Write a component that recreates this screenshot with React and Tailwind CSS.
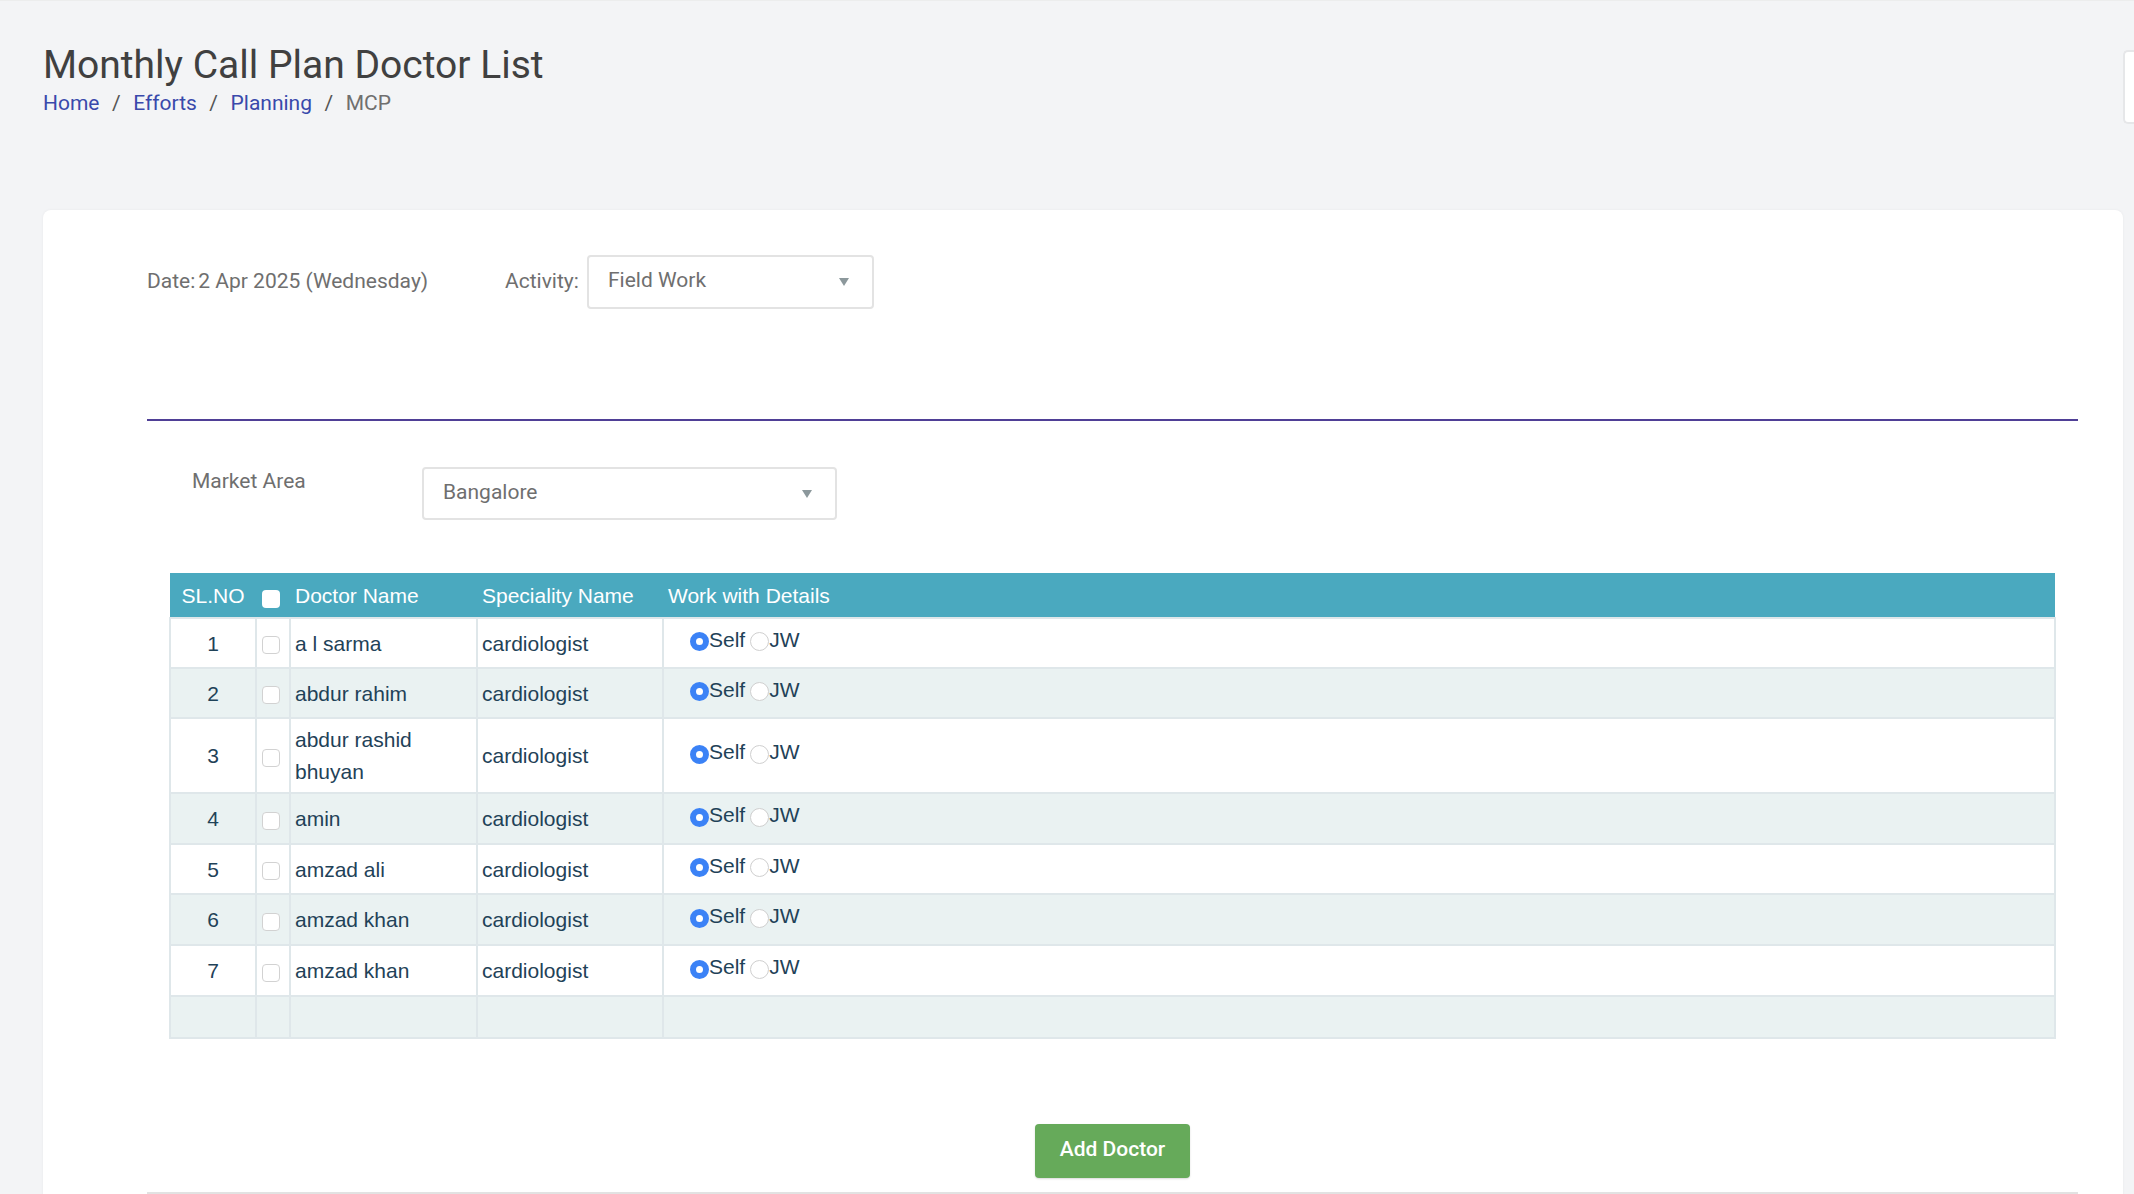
import React from "react";

const rows = [
  { n: 1, name: "a l sarma", h: "h-[50px]" },
  { n: 2, name: "abdur rahim", h: "h-[50px]" },
  { n: 3, name: "abdur rashid bhuyan", h: "h-[75px]" },
  { n: 4, name: "amin", h: "h-[51px]" },
  { n: 5, name: "amzad ali", h: "h-[50px]" },
  { n: 6, name: "amzad khan", h: "h-[51px]" },
  { n: 7, name: "amzad khan", h: "h-[51px]" },
];

const Caret = () => (
  <svg width="10" height="8" viewBox="0 0 10 8" className="shrink-0">
    <path d="M0 0H10L5 8Z" fill="#8c989c" />
  </svg>
);

const Sep = () => <span className="text-[#555]">/</span>;

function Select({ label, size }) {
  return (
    <div className={`flex ${size} items-center justify-between rounded-[4px] border-2 border-[#e3e3e3] bg-white pl-[19px] pr-[23px] text-[#6f6f6f]`}>
      <span className="mb-[2px]">{label}</span>
      <Caret />
    </div>
  );
}

const cell = "border-2 border-[#dfe7ea] p-0 pt-[1px] align-middle";

function Row({ row, even }) {
  return (
    <tr className={`${row.h} ${even ? "bg-[#eaf2f2]" : "bg-white"}`}>
      <td className={`${cell} text-center`}>{row.n}</td>
      <td className={cell}>
        <span className="ml-[5px] mt-[3px] block h-[18px] w-[18px] rounded-[4px] border border-[#d2d2d2] bg-white" />
      </td>
      <td className={`${cell} pl-[4px] pr-[4px] leading-[32px]`}>
        <span className="block w-[140px]">{row.name}</span>
      </td>
      <td className={`${cell} pl-[4px]`}>cardiologist</td>
      <td className={`${cell} pl-[26px]`}>
        <div className="-mt-[8px] flex items-center">
          <span className="mt-[4px] h-[19px] w-[19px] rounded-full border-[6px] border-[#3b82f6] bg-white" />
          <span>Self</span>
          <span className="ml-[5px] mt-[4px] h-[19px] w-[19px] rounded-full border border-[#cfcfcf] bg-white" />
          <span>JW</span>
        </div>
      </td>
    </tr>
  );
}

export default function App() {
  return (
    <div className="relative h-[1194px] overflow-hidden border-t border-[#eceded] bg-[#f3f4f6] pl-[43px] pr-[11px] font-['Roboto',sans-serif]">
      <h1 className="pt-[41px] text-[39px] font-normal leading-[46px] text-[#404040]">Monthly Call Plan Doctor List</h1>
      <nav className="mt-[1px] flex gap-[12.5px] text-[21px] leading-[28px] text-[#6f6f6f]">
        <a className="text-[#3949ab]">Home</a>
        <Sep />
        <a className="text-[#3949ab]">Efforts</a>
        <Sep />
        <a className="text-[#3949ab]">Planning</a>
        <Sep />
        <span>MCP</span>
      </nav>

      <div className="absolute right-0 top-[49px] h-[74px] w-[11px] rounded-l-[5px] border-y-2 border-l-2 border-[#e6e7e9] bg-white" />

      <main className="mt-[93px] h-[1000px] rounded-[8px] bg-white pl-[104px] pr-[45px] pt-[45px] text-[21px] text-[#6f6f6f] shadow-[0_0_3px_rgba(0,0,0,0.05)]">
        <div className="flex items-center">
          <span className="w-[358px]">
            Date:<span className="ml-[3px]">2 Apr 2025 (Wednesday)</span>
          </span>
          <span className="w-[82px]">Activity:</span>
          <Select label="Field Work" size="h-[54px] w-[287px]" />
        </div>

        <div className="mt-[110px] h-[2px] bg-[#4f3f96]" />

        <div className="mt-[46px] flex items-start pl-[45px]">
          <span className="w-[230px] leading-[28px]">Market Area</span>
          <Select label="Bangalore" size="h-[53px] w-[415px]" />
        </div>

        <div className="mx-[22px] mt-[53px] font-['Liberation_Sans',sans-serif] text-[21px] text-[#1f4258]">
          <table className="w-full table-fixed border-collapse">
            <colgroup>
              <col className="w-[86px]" />
              <col className="w-[34px]" />
              <col className="w-[187px]" />
              <col className="w-[186px]" />
              <col />
            </colgroup>
            <thead>
              <tr className="h-[45px] bg-[#4aa9bf] text-left text-white">
                <th className="p-0 pt-[2px] text-center font-normal">SL.NO</th>
                <th className="p-0 font-normal">
                  <span className="ml-[6px] mt-[8px] block h-[18px] w-[18px] rounded-[4px] bg-white" />
                </th>
                <th className="p-0 pl-[5px] pt-[2px] font-normal">Doctor Name</th>
                <th className="p-0 pl-[5px] pt-[2px] font-normal">Speciality Name</th>
                <th className="p-0 pl-[5px] pt-[2px] font-normal">Work with Details</th>
              </tr>
            </thead>
            <tbody>
              {rows.map((r, i) => (
                <Row key={r.n} row={r} even={i % 2 === 1} />
              ))}
              <tr className="h-[42px] bg-[#eaf2f2]">
                <td className={cell} />
                <td className={cell} />
                <td className={cell} />
                <td className={cell} />
                <td className={cell} />
              </tr>
            </tbody>
          </table>
        </div>

        <div className="mt-[85px] flex justify-center">
          <button className="h-[54px] w-[155px] rounded-[4px] bg-[#66aa5a] text-[21px] font-medium text-white shadow-[0_1px_2px_rgba(0,0,0,0.15)]">
            <span className="relative -top-[1px]">Add Doctor</span>
          </button>
        </div>
        <div className="mt-[14px] h-[2px] bg-[#e2e2e2]" />
      </main>
    </div>
  );
}
